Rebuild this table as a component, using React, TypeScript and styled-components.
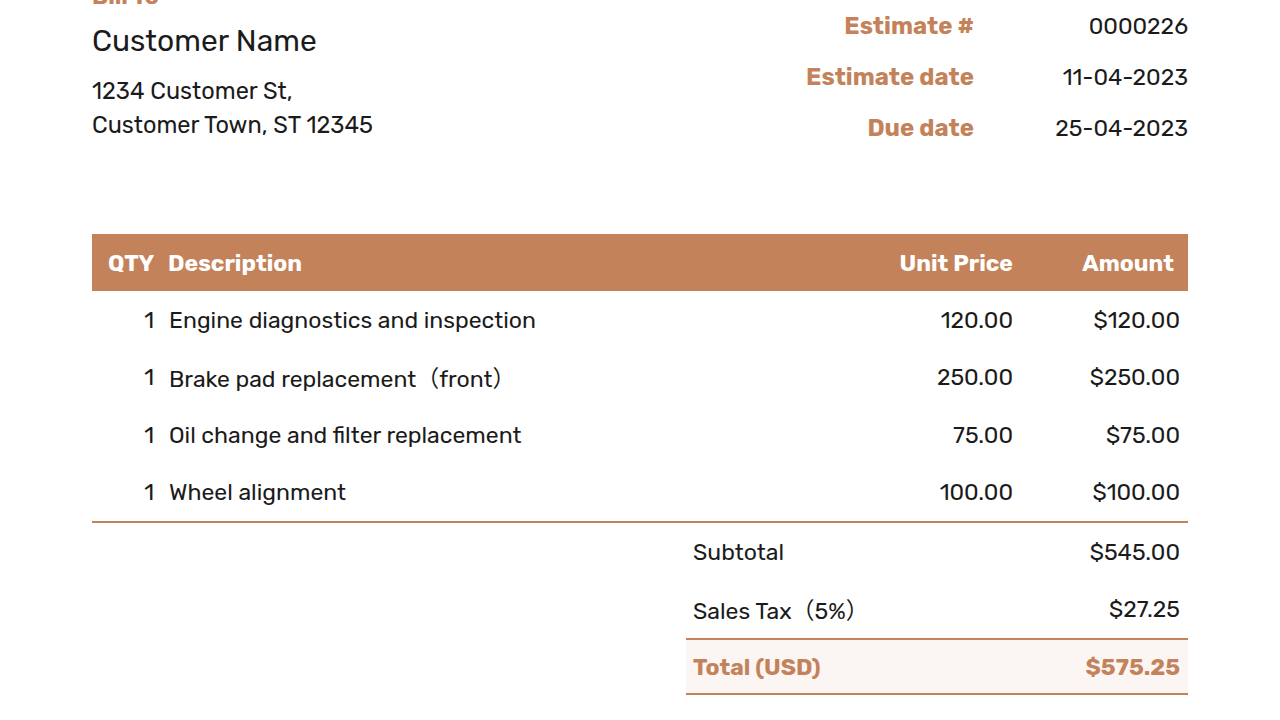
import React from "react";
import styled, { createGlobalStyle } from "styled-components";

const Global = createGlobalStyle`
  html, body { margin: 0; padding: 0; background: #fff; overflow: hidden; }
  body { font-family: Rubik, Inter, "Noto Sans CJK JP", sans-serif; color: #1b1b1b; }
`;

const ACCENT = "#c4825a";

const Page = styled.div`
  width: 1096px;
  margin: -16px 0 0 92px;
`;

const Header = styled.div`
  display: flex;
  justify-content: space-between;
  align-items: flex-start;
`;

const BillTo = styled.div`
  display: flex;
  flex-direction: column;
`;

const Label = styled.div`
  color: ${ACCENT};
  font-weight: 700;
  font-size: 23px;
  line-height: 24px;
`;

const CustomerName = styled.div`
  font-size: 30px;
  line-height: 34px;
  margin-top: 16px;
`;

const Address = styled.div`
  font-size: 23.5px;
  line-height: 34px;
  margin-top: 16px;
`;

const Meta = styled.div`
  display: grid;
  grid-template-columns: auto 214px;
  row-gap: 26px;
  margin-top: 30px;
  font-size: 23px;
  line-height: 25px;
`;

const MetaLabel = styled.div`
  color: ${ACCENT};
  font-weight: 700;
  font-size: 24px;
  text-align: right;
`;

const MetaValue = styled.div`
  text-align: right;
`;

const Table = styled.div`
  margin-top: 92px;
  display: grid;
  grid-template-columns: 76px 1fr 200px 175px;
  font-size: 23px;
  border-bottom: 2px solid ${ACCENT};
`;

const HeadCell = styled.div<{ $align?: string; $pl?: number; $pr?: number }>`
  background: ${ACCENT};
  color: #fff;
  font-weight: 700;
  height: 57px;
  display: flex;
  align-items: center;
  justify-content: ${(p) => (p.$align === "right" ? "flex-end" : "flex-start")};
  padding-left: ${(p) => p.$pl ?? 0}px;
  padding-right: ${(p) => p.$pr ?? 0}px;
`;

const Cell = styled.div<{ $align?: string; $pl?: number; $pr?: number }>`
  height: 57.5px;
  display: flex;
  align-items: center;
  justify-content: ${(p) => (p.$align === "right" ? "flex-end" : "flex-start")};
  padding-left: ${(p) => p.$pl ?? 0}px;
  padding-right: ${(p) => p.$pr ?? 0}px;
`;

const Totals = styled.div`
  margin-left: auto;
  width: 502px;
  font-size: 23px;
`;

const TotalRow = styled.div<{ $grand?: boolean }>`
  display: flex;
  justify-content: space-between;
  align-items: center;
  height: ${(p) => (p.$grand ? 53 : 57.5)}px;
  padding: 0 8px 0 7px;
  background: ${(p) => (p.$grand ? "#fbf6f3" : "transparent")};
  color: ${(p) => (p.$grand ? ACCENT : "inherit")};
  font-weight: ${(p) => (p.$grand ? 700 : 400)};
  border-top: ${(p) => (p.$grand ? `2px solid ${ACCENT}` : "none")};
  border-bottom: ${(p) => (p.$grand ? `2px solid ${ACCENT}` : "none")};
`;

const items = [
  { qty: 1, desc: "Engine diagnostics and inspection", price: "120.00", amount: "$120.00" },
  { qty: 1, desc: "Brake pad replacement（front）", price: "250.00", amount: "$250.00" },
  { qty: 1, desc: "Oil change and filter replacement", price: "75.00", amount: "$75.00" },
  { qty: 1, desc: "Wheel alignment", price: "100.00", amount: "$100.00" },
];

export default function App() {
  return (
    <>
      <Global />
      <Page>
        <Header>
          <BillTo>
            <Label>Bill To</Label>
            <CustomerName>Customer Name</CustomerName>
            <Address>
              1234 Customer St,
              <br />
              Customer Town, ST 12345
            </Address>
          </BillTo>
          <Meta>
            <MetaLabel>Estimate #</MetaLabel>
            <MetaValue>0000226</MetaValue>
            <MetaLabel>Estimate date</MetaLabel>
            <MetaValue>11-04-2023</MetaValue>
            <MetaLabel>Due date</MetaLabel>
            <MetaValue>25-04-2023</MetaValue>
          </Meta>
        </Header>
        <Table>
          <HeadCell $pl={16}>QTY</HeadCell>
          <HeadCell>Description</HeadCell>
          <HeadCell $align="right">Unit Price</HeadCell>
          <HeadCell $align="right" $pr={14}>Amount</HeadCell>
          {items.map((it) => (
            <React.Fragment key={it.desc}>
              <Cell $align="right" $pr={14}>{it.qty}</Cell>
              <Cell $pl={1}>{it.desc}</Cell>
              <Cell $align="right">{it.price}</Cell>
              <Cell $align="right" $pr={8}>{it.amount}</Cell>
            </React.Fragment>
          ))}
        </Table>
        <Totals>
          <TotalRow>
            <span>Subtotal</span>
            <span>$545.00</span>
          </TotalRow>
          <TotalRow>
            <span>Sales Tax（5%）</span>
            <span>$27.25</span>
          </TotalRow>
          <TotalRow $grand>
            <span>Total (USD)</span>
            <span>$575.25</span>
          </TotalRow>
        </Totals>
      </Page>
    </>
  );
}
